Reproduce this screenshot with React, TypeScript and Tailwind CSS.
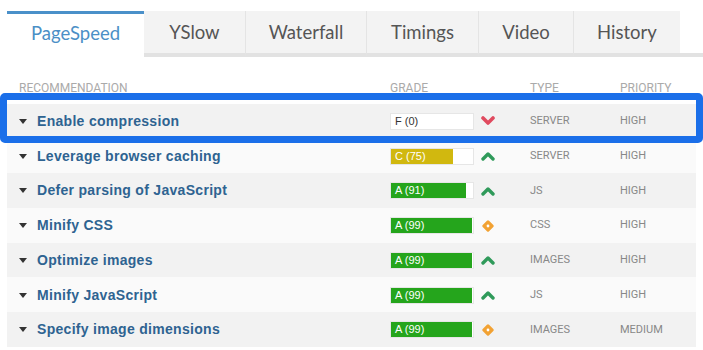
import React from 'react';

const tabs = [
  { label: 'PageSpeed', width: 'w-[137px]' },
  { label: 'YSlow', width: 'w-[101px]' },
  { label: 'Waterfall', width: 'w-[121px]' },
  { label: 'Timings', width: 'w-[112px]' },
  { label: 'Video', width: 'w-[95px]' },
  { label: 'History', width: 'w-[107px]' },
];

type Icon = 'down' | 'up' | 'diamond';

const rows: { name: string; grade: string; score: number; color: string; icon: Icon; type: string; priority: string }[] = [
  { name: 'Enable compression', grade: 'F (0)', score: 0, color: '#ffffff', icon: 'down', type: 'SERVER', priority: 'HIGH' },
  { name: 'Leverage browser caching', grade: 'C (75)', score: 75, color: '#d1b80f', icon: 'up', type: 'SERVER', priority: 'HIGH' },
  { name: 'Defer parsing of JavaScript', grade: 'A (91)', score: 91, color: '#25a51c', icon: 'up', type: 'JS', priority: 'HIGH' },
  { name: 'Minify CSS', grade: 'A (99)', score: 99, color: '#25a51c', icon: 'diamond', type: 'CSS', priority: 'HIGH' },
  { name: 'Optimize images', grade: 'A (99)', score: 99, color: '#25a51c', icon: 'up', type: 'IMAGES', priority: 'HIGH' },
  { name: 'Minify JavaScript', grade: 'A (99)', score: 99, color: '#25a51c', icon: 'up', type: 'JS', priority: 'HIGH' },
  { name: 'Specify image dimensions', grade: 'A (99)', score: 99, color: '#25a51c', icon: 'diamond', type: 'IMAGES', priority: 'MEDIUM' },
];

const StatusIcon = ({ kind }: { kind: Icon }) => {
  if (kind === 'down') {
    return (
      <svg width="14" height="10" viewBox="0 0 14 10">
        <polyline points="2,2 7,7 12,2" fill="none" stroke="#e04a5f" strokeWidth="3.6" strokeLinecap="round" strokeLinejoin="round" />
      </svg>
    );
  }
  if (kind === 'up') {
    return (
      <svg width="14" height="10" viewBox="0 0 14 10">
        <polyline points="2,8 7,3 12,8" fill="none" stroke="#2f9a5a" strokeWidth="3.4" strokeLinecap="round" strokeLinejoin="round" />
      </svg>
    );
  }
  return (
    <svg width="14" height="14" viewBox="0 0 14 14">
      <rect x="2.5" y="2.5" width="9" height="9" rx="1.5" transform="rotate(45 7 7)" fill="#f2a233" />
      <circle cx="7" cy="7" r="1.4" fill="#ffffff" />
    </svg>
  );
};

const Caret = () => (
  <svg width="8" height="5" viewBox="0 0 8 5">
    <polygon points="0,0 8,0 4,5" fill="#333333" />
  </svg>
);

const App = () => {
  return (
    <div className="relative w-[703px] h-[350px] overflow-hidden bg-white font-['Roboto',sans-serif]">
      {/* Tabs */}
      <div className="flex pt-[11px] pl-[7px]">
        {tabs.map((tab, i) =>
          i === 0 ? (
            <div
              key={tab.label}
              className={`${tab.width} h-[46px] border-t-[3px] border-[#4a90c9] bg-white flex items-center justify-center pb-[3px] font-['Lato',sans-serif] text-[18.5px] text-[#4b8fc6]`}
            >
              {tab.label}
            </div>
          ) : (
            <div
              key={tab.label}
              className={`${tab.width} h-[46px] border-b-4 border-[#e2e2e2] bg-[#f3f3f3] flex items-center justify-center pt-[1px] font-['Lato',sans-serif] text-[18.5px] text-[#555555] ${i > 1 ? 'border-l border-l-[#e4e4e4]' : ''}`}
            >
              {tab.label}
            </div>
          )
        )}
        <div className="flex-1 h-[46px] border-b-4 border-[#e2e2e2]" />
      </div>

      {/* Header */}
      <div className="mx-[7px] h-[46px] grid grid-cols-[383px_140px_90px_1fr] items-end pb-[8px] text-[12px] leading-[14px] text-[#aaaaaa] uppercase">
        <div className="pl-3">Recommendation</div>
        <div>Grade</div>
        <div>Type</div>
        <div>Priority</div>
      </div>

      {/* Rows */}
      <div className="mx-[7px] mt-[0.5px]">
        {rows.map((row, i) => (
          <div
            key={row.name}
            className={`h-[34.75px] grid grid-cols-[383px_140px_90px_1fr] items-center pt-[1px] ${i % 2 === 0 ? 'bg-[#f2f2f2]' : 'bg-[#fafafa]'}`}
          >
            <div className="flex items-center pl-3">
              <Caret />
              <span className="ml-[10px] font-['Liberation_Sans',Arial,sans-serif] font-bold text-[14px] tracking-[0.3px] text-[#2e6391]">
                {row.name}
              </span>
            </div>
            <div className="flex items-center">
              <div className="relative w-[84px] h-[17px] bg-white border border-[#e6e6e6] flex items-center">
                <div className="absolute left-0 top-0 bottom-0" style={{ width: `${row.score}%`, backgroundColor: row.color }} />
                <span
                  className={`relative pl-[4px] font-['Liberation_Sans',Arial,sans-serif] text-[11px] leading-[13px] ${row.score === 0 ? 'text-[#333333]' : 'text-white'}`}
                >
                  {row.grade}
                </span>
              </div>
              <div className="ml-[7px] w-[14px] flex justify-center">
                <StatusIcon kind={row.icon} />
              </div>
            </div>
            <div className="text-[11px] text-[#888888]">{row.type}</div>
            <div className="text-[11px] text-[#888888]">{row.priority}</div>
          </div>
        ))}
      </div>

      {/* Highlight annotation */}
      <div className="absolute left-0 top-[93px] w-[703px] h-[50px] border-[7px] border-[#1b6fe9] rounded-[5px]" />
    </div>
  );
};

export default App;
